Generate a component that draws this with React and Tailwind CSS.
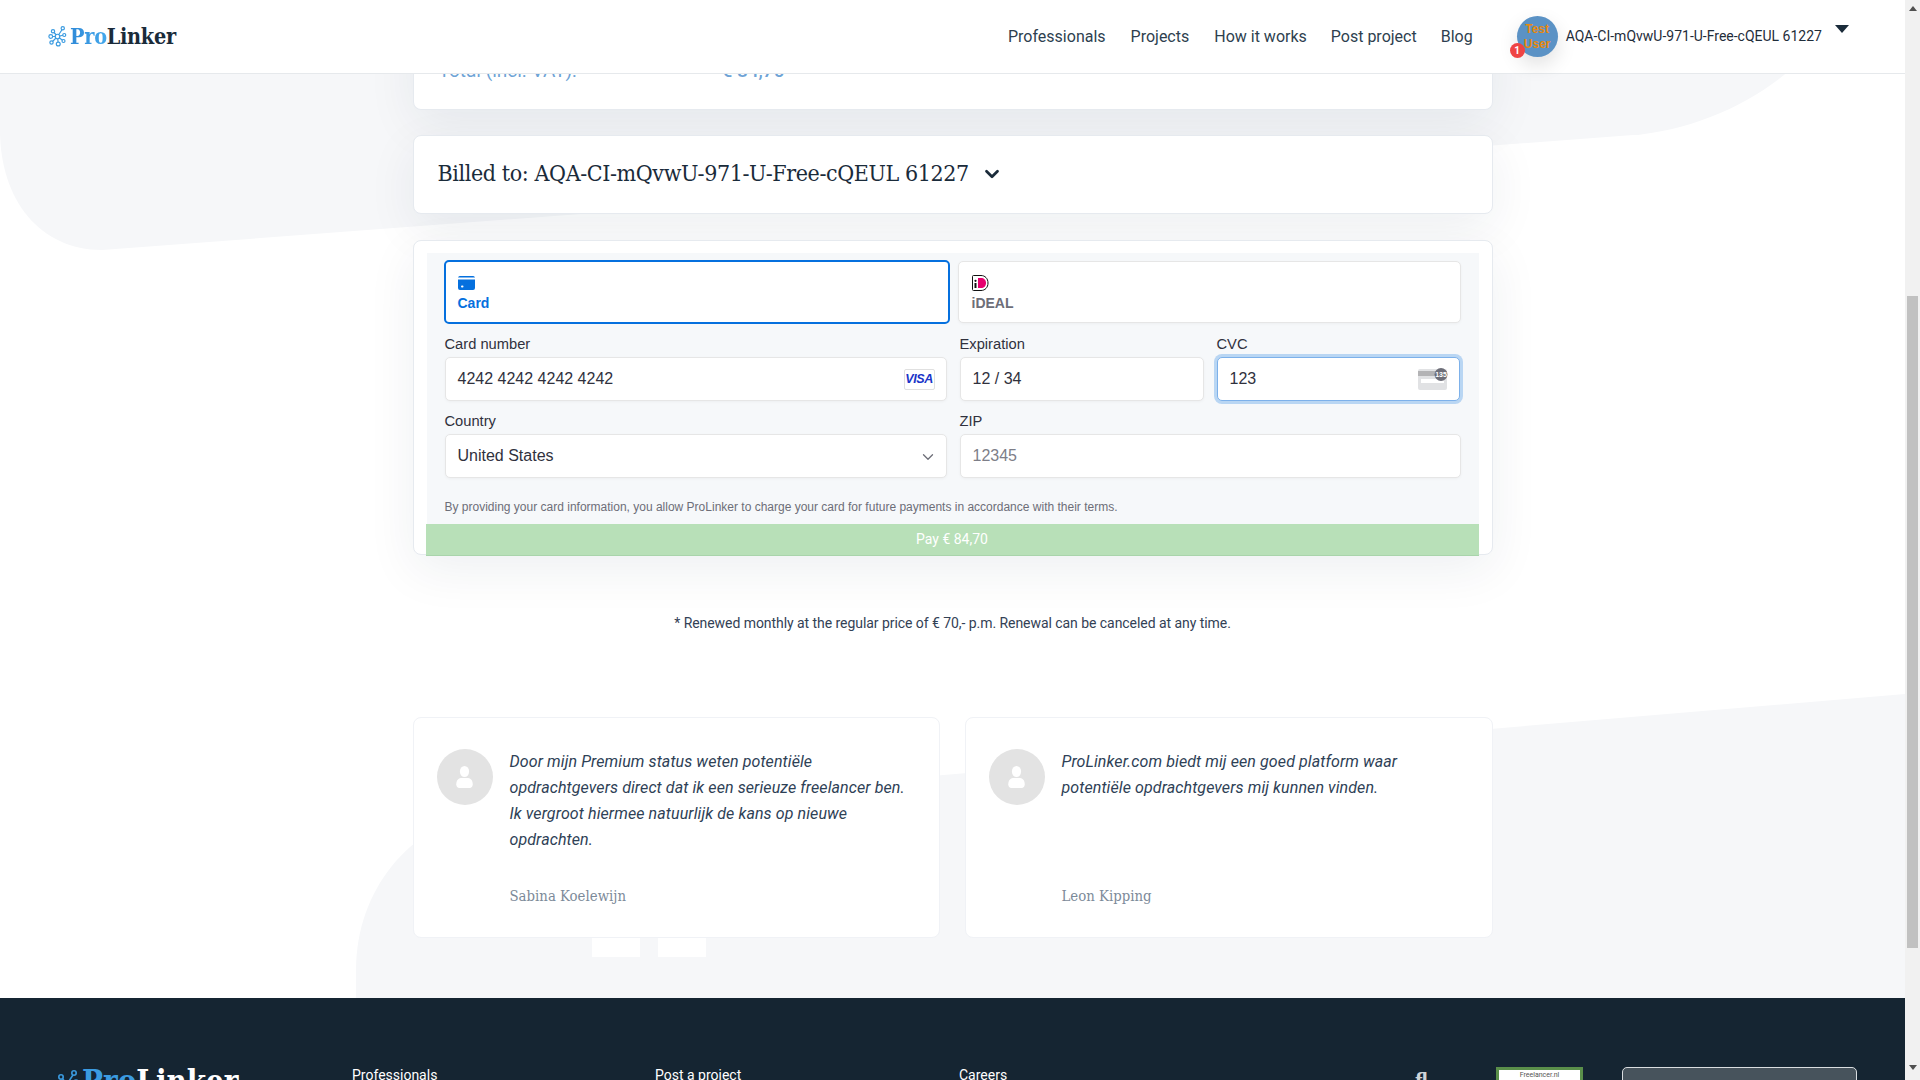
import React from "react";
import { ChevronDown } from "lucide-react";

const slab = "font-['Roboto_Slab','DejaVu_Serif_Condensed','DejaVu_Serif',serif] font-stretch-condensed";
const stripe = "font-['Liberation_Sans',Arial,sans-serif]";
const nodes = [[14, 14, 3], [5, 14, 2.5], [8, 7, 2.2], [21, 3, 2.2], [23, 12, 2], [6, 22, 2.2], [15, 24, 2.6], [22, 20, 2]];
const cardShadow = "shadow-[0_15px_50px_rgba(20,40,70,0.07)]";

function LogoIcon({ className, fill }) {
  return (
    <svg viewBox="0 0 28 28" className={className} fill="none" stroke="#3b9be0" strokeWidth="1.6">
      <path d="M14 14L8 7M14 14L5 14M14 14L20 5M14 14L23 12M14 14L6 22M14 14L15 24M14 14L22 20" />
      {nodes.map(([x, y, r], i) => (
        <circle key={i} cx={x} cy={y} r={r} fill={fill} />
      ))}
    </svg>
  );
}

function Header() {
  const links = [
    ["Professionals", "ml-[831px]"],
    ["Projects", "ml-[25px]"],
    ["How it works", "ml-[25px]"],
    ["Post project", "ml-[24px]"],
    ["Blog", "ml-[24px]"],
  ];
  return (
    <header className="absolute left-0 right-0 top-0 z-20 flex h-[74px] items-center border-b border-[#e6e9ec] bg-white pl-[47px]">
      <LogoIcon className="h-[25px] w-[21px] shrink-0" fill="#fff" />
      <div className={`${slab} ml-[2px] w-[107px] whitespace-nowrap text-[21.5px] font-bold leading-none tracking-[-0.3px]`}>
        <span className="bg-gradient-to-r from-[#2f8ad8] to-[#44a8ec] bg-clip-text text-transparent">Pro</span>
        <span className="text-[#1a2b3a]">Linker</span>
      </div>
      {links.map(([label, ml]) => (
        <a key={label} className={`${ml} text-[16px] text-[#2e3f4f]`}>{label}</a>
      ))}
      <div className="relative ml-[44px] flex h-[41px] w-[41px] shrink-0 items-center justify-center rounded-full bg-[#5b92c5] text-center text-[12px] font-bold leading-[15px] text-[#e8890c] shadow-[0_8px_20px_rgba(0,0,0,0.12)]">
        <span className="font-['Liberation_Sans',sans-serif]">Test<br />User</span>
        <span className="absolute left-[-7px] top-[27px] flex h-[15px] w-[15px] items-center justify-center rounded-full bg-[#ef4444] text-[10px] font-bold leading-none text-white">1</span>
      </div>
      <span className="ml-[8px] whitespace-nowrap text-[14px] text-[#1f2d3a]">AQA-CI-mQvwU-971-U-Free-cQEUL 61227</span>
      <span className="mb-[16px] ml-[13px] h-0 w-0 border-x-[7px] border-t-[8px] border-x-transparent border-t-[#1a2b3a]" />
    </header>
  );
}

function Blobs() {
  return (
    <svg className="pointer-events-none absolute inset-0 h-[1080px] w-[1905px]" viewBox="0 0 1905 1080" fill="#f6f7f9">
      <path d="M0 0H1845C1810 75 1720 128 1633 135L102 250C40 250 0 200 0 130Z" />
      <path d="M1905 694L480 814C410 825 356 890 356 970V1000H1905Z" />
    </svg>
  );
}

function CardIcon() {
  return (
    <svg viewBox="0 0 17 14" className="h-[14px] w-[17px]">
      <path d="M2 0h13a2 2 0 0 1 2 1.5H0A2 2 0 0 1 2 0zM0 3.5h17V12a2 2 0 0 1-2 2H2a2 2 0 0 1-2-2z" fill="#0570de" />
      <rect x="3" y="9.5" width="2.5" height="2" rx="1" fill="#fff" />
    </svg>
  );
}

function IdealIcon() {
  return (
    <svg viewBox="0 0 17 16" className="h-[16px] w-[17px]">
      <path d="M1.5.5H9c4 0 7 3 7 7.5s-3 7.500-7 7.500H1.500a1 1 0 0 1-1-1v-13a1 1 0 0 1 1-1z" fill="#fff" stroke="#111" />
      <path d="M6 3h3c3 0 5 2 5 5s-2 5-5 5H6z" fill="#e6006e" />
      <rect x="2.500" y="8" width="2" height="5" fill="#111" />
      <circle cx="3.500" cy="5.800" r="1.100" fill="#111" />
    </svg>
  );
}

function CvcIcon() {
  return (
    <svg viewBox="0 0 30 22" className="h-[22px] w-[30px]">
      <rect y="1" width="29" height="21" rx="2" fill="#e1e2e4" />
      <rect y="3" width="29" height="5" fill="#b3b3b5" />
      <rect x="3" y="11" width="23" height="4" fill="#fff" />
      <circle cx="23" cy="6.500" r="6.500" fill="#6d6e78" />
      <text x="23" y="9" textAnchor="middle" fontSize="7" fontWeight="700" fill="#fff" fontFamily="Liberation Sans">135</text>
    </svg>
  );
}

const inputBox = "flex h-[44px] items-center rounded-[5px] border bg-white pl-[12px] pr-[11px] text-[16px]";
const idleBox = "border-[#e6e6e6] shadow-[0_1px_3px_rgba(0,0,0,0.04)]";
const label = "mb-[4px] block text-[14.7px] leading-[17px] text-[#30313d]";

function PaymentCard() {
  return (
    <section className={`${stripe} ${cardShadow} relative mt-[26px] h-[315px] rounded-lg border border-[#e6eaef] bg-white px-[13px] pt-[12px]`}>
      <div className="h-[271px] bg-[#f6f8fa] pl-[17px] pr-[20px] pt-[7px]">
        <div className="grid grid-cols-[506px_503px] gap-x-[8px]">
          <div className="h-[64px] rounded-[5px] border-2 border-[#0570de] bg-white pl-[12px] pt-[14px] text-[14px] font-bold leading-[17px] text-[#0570de]">
            <CardIcon />
            <div className="mt-[5px]">Card</div>
          </div>
          <div className="mt-px h-[62px] rounded-[5px] border border-[#e6e6e6] bg-white pl-[13px] pt-[13px] text-[14px] font-bold leading-[17px] text-[#6d6e78] shadow-[0_1px_3px_rgba(0,0,0,0.04)]">
            <IdealIcon />
            <div className="mt-[4px]">iDEAL</div>
          </div>
        </div>
        <div className="mt-[12px] grid grid-cols-[502px_244px_243px] gap-x-[13px] pl-px">
          <div>
            <span className={label}>Card number</span>
            <div className={`${inputBox} ${idleBox} justify-between text-[#30313d]`}>
              <span>4242 4242 4242 4242</span>
              <span className="flex h-[21px] w-[31px] items-center justify-center rounded-[2px] border border-[#e0e0e0] text-[12.5px] font-bold italic tracking-[-0.4px] text-[#1a35c8]">VISA</span>
            </div>
          </div>
          <div>
            <span className={label}>Expiration</span>
            <div className={`${inputBox} ${idleBox} text-[#30313d]`}>12 / 34</div>
          </div>
          <div>
            <span className={label}>CVC</span>
            <div className={`${inputBox} justify-between border-[#7db1ea] text-[#30313d] shadow-[0_0_0_3px_rgba(5,112,222,0.25)]`}>
              <span>123</span>
              <CvcIcon />
            </div>
          </div>
        </div>
        <div className="mt-[12px] grid grid-cols-[502px_501px] gap-x-[13px] pl-px">
          <div>
            <span className={label}>Country</span>
            <div className={`${inputBox} ${idleBox} justify-between text-[#30313d]`}>
              <span>United States</span>
              <ChevronDown size={18} strokeWidth={1.75} className="-mr-[2px] mt-[2px] text-[#6d6e78]" />
            </div>
          </div>
          <div>
            <span className={label}>ZIP</span>
            <div className={`${inputBox} ${idleBox} text-[#7d7e88]`}>12345</div>
          </div>
        </div>
        <p className="mt-[22px] pl-px text-[12px] leading-[14px] text-[#6d6e78]">By providing your card information, you allow ProLinker to charge your card for future payments in accordance with their terms.</p>
      </div>
      <div className="absolute bottom-[-2px] left-[12px] right-[13px] flex h-[32px] items-center justify-center border-b border-[#a9d4ab] bg-[#b8e0b8] font-['Roboto',sans-serif] text-[14px] text-white">Pay € 84,70</div>
    </section>
  );
}

function Testimonial({ text, name }) {
  return (
    <article className="flex h-[221px] flex-col rounded-lg border border-[#f0f2f6] bg-white pl-[23px] pt-[31px]">
      <div className="flex">
        <div className="flex h-[56px] w-[56px] shrink-0 items-center justify-center rounded-full bg-[#e3e3e3]">
          <svg viewBox="0 0 18 24" className="h-[22px] w-[17px]" fill="#fff">
            <ellipse cx="9" cy="6" rx="5" ry="6" />
            <path d="M0 20c0-5 3-7 6-7h6c3 0 6 2 6 7 0 2-1 4-3 4H3c-2 0-3-2-3-4z" />
          </svg>
        </div>
        <p className="ml-[17px] h-[104px] w-[402px] text-[16px] italic leading-[26px] tracking-[0.1px] text-[#2e4156]">{text}</p>
      </div>
      <div className={`${slab} ml-[73px] mt-[33px] text-[14.8px] leading-[20px] text-[#7c8a99]`}>{name}</div>
    </article>
  );
}

function Footer() {
  return (
    <footer className="relative flex h-[82px] overflow-hidden bg-[#152532] pl-[53px] pt-[69px] text-[14px] text-white">
      <div className="relative flex w-[299px] shrink-0">
        <LogoIcon className="h-[34px] w-[28px] shrink-0" fill="#152532" />
        <div className={`${slab} ml-px mt-[-2px] whitespace-nowrap text-[31px] font-bold leading-[32px]`}>
          <span className="text-[#3b9be0]">Pro</span><span className="text-white">Linker</span>
        </div>
      </div>
      <a className="w-[303px] shrink-0 leading-[16px]">Professionals</a>
      <a className="w-[304px] shrink-0 leading-[16px]">Post a project</a>
      <a className="w-[456px] shrink-0 leading-[16px]">Careers</a>
      <div className={`${slab} mt-[4px] w-[81px] shrink-0 text-[20px] font-bold leading-[20px] text-[#d0d4d8]`}>fl</div>
      <div className="h-[60px] w-[87px] shrink-0 border-[3px] border-[#5a8f4a] bg-white text-center text-[7px] leading-[10px] text-[#555]">Freelancer.nl</div>
      <div className="ml-[39px] h-[60px] w-[235px] shrink-0 rounded-[5px] border border-[#d9dde0] bg-[#47535c]" />
    </footer>
  );
}

function Scrollbar() {
  return (
    <aside className="relative flex w-[15px] shrink-0 flex-col items-center bg-[#f1f1f1]">
      <span className="mt-[6px] h-0 w-0 border-x-[4px] border-b-[5px] border-x-transparent border-b-[#505050]" />
      <div className="mt-[285px] h-[652px] w-[11px] bg-[#c1c1c1]" />
      <span className="mt-[117px] h-0 w-0 border-x-[4px] border-t-[5px] border-x-transparent border-t-[#505050]" />
    </aside>
  );
}

export default function App() {
  return (
    <div className="flex h-[1080px] w-[1920px] overflow-hidden bg-white font-['Roboto',sans-serif]">
      <div className="relative h-[1080px] w-[1905px] overflow-hidden">
        <Blobs />
        <Header />
        <main className="relative mx-auto w-[1080px]">
          <section className={`${cardShadow} flex h-[110px] items-start rounded-b-lg border border-t-0 border-[#e6eaef] bg-white pl-[25px] pt-[59px] text-[19px] leading-[24px] text-[#6ea3d6]`}>
            <span className="w-[283px]">Total (incl. VAT):</span>
            <span className="font-medium">€ 84,70</span>
          </section>
          <section className={`${cardShadow} mt-[25px] flex h-[79px] items-center rounded-lg border border-[#e6eaef] bg-white pl-[24px]`}>
            <h2 className={`${slab} -mt-[2px] text-[23px] font-normal tracking-[-0.4px] text-[#1a2b3a]`}>Billed to: AQA-CI-mQvwU-971-U-Free-cQEUL 61227</h2>
            <ChevronDown size={22} strokeWidth={3} className="-mt-[2px] ml-[12px] text-[#1a2b3a]" />
          </section>
          <PaymentCard />
          <p className="mt-[58px] text-center text-[14px] leading-[20px] tracking-[-0.055px] text-[#334155]">* Renewed monthly at the regular price of € 70,- p.m. Renewal can be canceled at any time.</p>
          <div className="mt-[84px] grid grid-cols-[527px_528px] gap-x-[25px]">
            <Testimonial name="Sabina Koelewijn" text="Door mijn Premium status weten potentiële opdrachtgevers direct dat ik een serieuze freelancer ben. Ik vergroot hiermee natuurlijk de kans op nieuwe opdrachten." />
            <Testimonial name="Leon Kipping" text="ProLinker.com biedt mij een goed platform waar potentiële opdrachtgevers mij kunnen vinden." />
          </div>
          <div className="ml-[179px] flex gap-[18px]">
            <span className="h-[19px] w-[48px] bg-white" />
            <span className="h-[19px] w-[48px] bg-white" />
          </div>
        </main>
        <div className="absolute bottom-0 left-0 right-0"><Footer /></div>
      </div>
      <Scrollbar />
    </div>
  );
}
